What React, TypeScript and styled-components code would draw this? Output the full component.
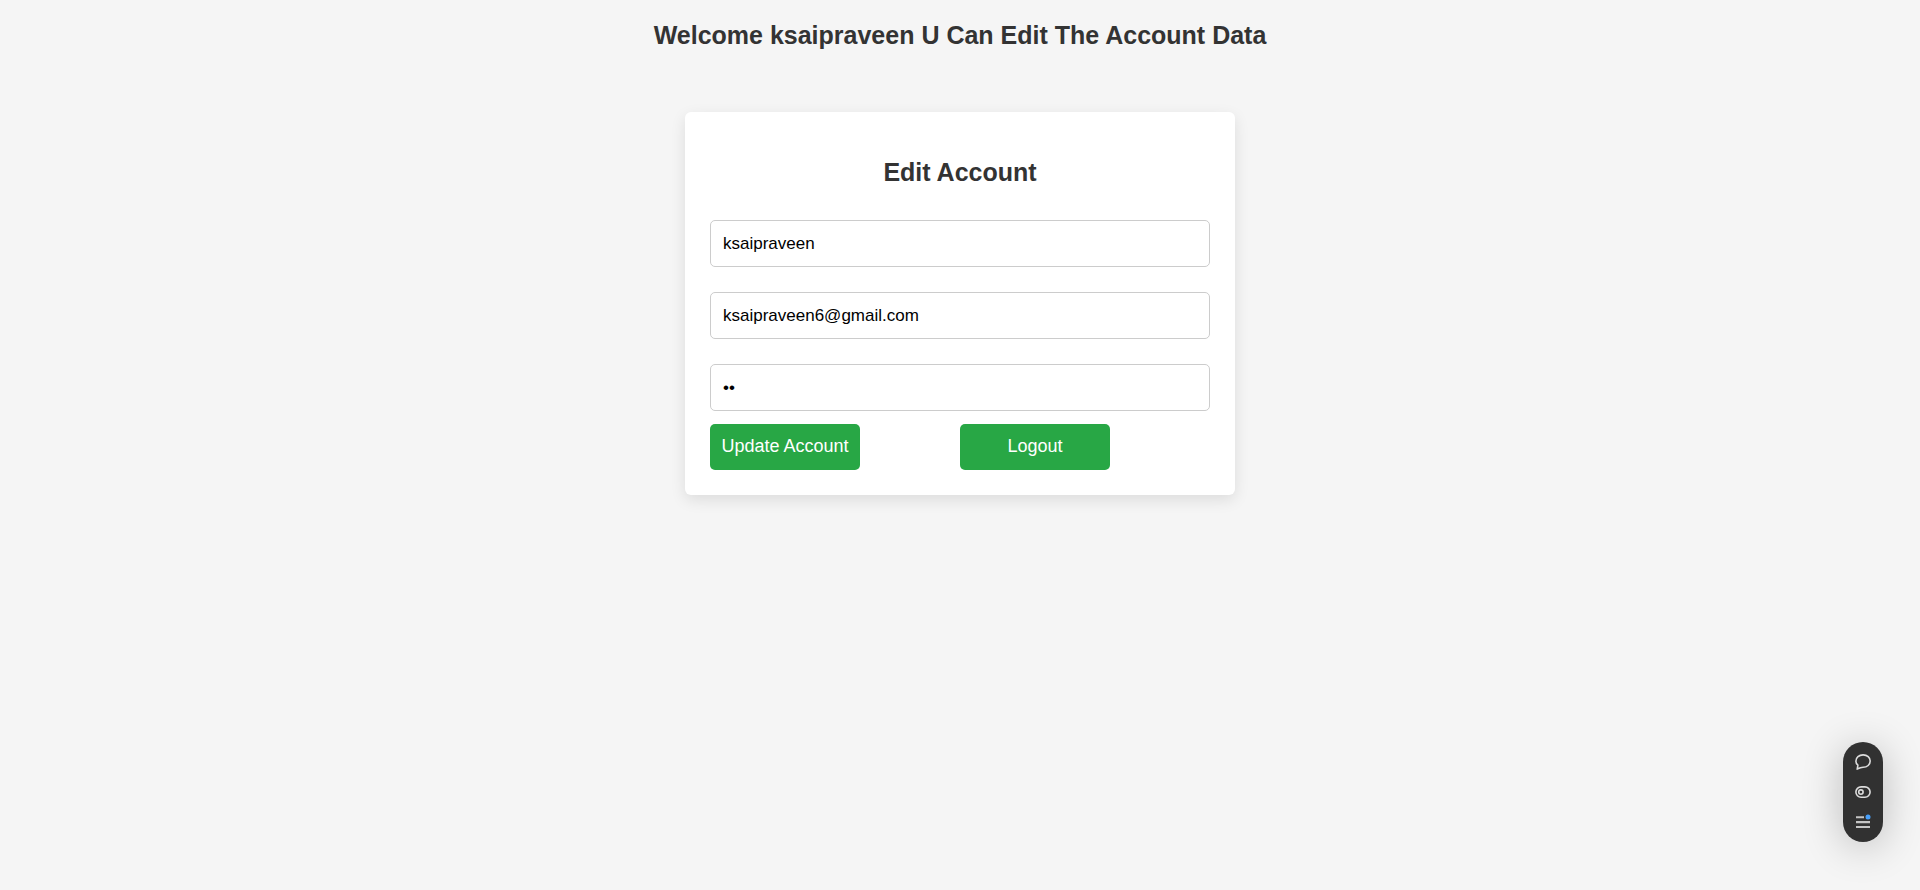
import React from "react";
import styled, { createGlobalStyle } from "styled-components";

const GlobalStyle = createGlobalStyle`
  html { min-height: 100%; background: #f5f5f5; }
  body { margin: 0; color: #333; font-family: "Liberation Sans", Arial, sans-serif; }
`;
const Page = styled.main`
  padding: 20px 20px 40px;
`;
const Title = styled.h1`
  margin: 0;
  font-size: 25px;
  line-height: 30px;
  text-align: center;
`;
const Card = styled.form`
  box-sizing: border-box;
  width: 100%;
  max-width: 550px;
  margin: 62px auto 0;
  padding: 25px;
  background: #fff;
  border-radius: 6px;
  box-shadow: 0 5px 15px rgba(0, 0, 0, 0.1);
`;
const Heading = styled.h2`
  margin: 20px 0 33px;
  font-size: 25px;
  line-height: 30px;
  text-align: center;
`;
const Fields = styled.div`
  display: flex;
  flex-direction: column;
  gap: 25px;
`;
const Input = styled.input`
  box-sizing: border-box;
  width: 100%;
  height: 47px;
  padding: 0 12px;
  border: 1px solid #ccc;
  border-radius: 5px;
  background: #fff;
  color: #000;
  font: 17px "Liberation Sans", Arial, sans-serif;
`;
const Actions = styled.div`
  display: flex;
  flex-wrap: wrap;
  gap: 12px 100px;
  margin-top: 13px;
`;
const Button = styled.button`
  width: 150px;
  height: 46px;
  padding: 0 0 2px;
  border: 0;
  border-radius: 5px;
  background: #28a745;
  color: #fff;
  font: 18px "Liberation Sans", Arial, sans-serif;
  cursor: pointer;
`;
const Toolbar = styled.div`
  position: fixed;
  right: 37px;
  bottom: 48px;
  box-sizing: border-box;
  display: flex;
  flex-direction: column;
  width: 40px;
  height: 100px;
  padding: 5px;
  border-radius: 20px;
  background: #313131;
  box-shadow: 0 5px 40px rgba(0, 0, 0, 0.24);
`;
const Tool = styled.button`
  display: flex;
  flex: 1;
  align-items: center;
  justify-content: center;
  padding: 0;
  border: 0;
  background: none;
  color: #dcdcdc;
  cursor: pointer;
`;
const Icon = styled.svg`
  width: 16px;
  height: 16px;
  fill: none;
  stroke: currentColor;
  stroke-width: 1.6;
  overflow: visible;
`;

export default function App() {
  return (
    <>
      <GlobalStyle />
      <Page>
        <Title>Welcome ksaipraveen U Can Edit The Account Data</Title>
        <Card onSubmit={(e) => e.preventDefault()}>
          <Heading>Edit Account</Heading>
          <Fields>
            <Input aria-label="Username" defaultValue="ksaipraveen" />
            <Input aria-label="Email" type="email" defaultValue="ksaipraveen6@gmail.com" />
            <Input aria-label="Password" type="password" defaultValue="12" />
          </Fields>
          <Actions>
            <Button type="submit">Update Account</Button>
            <Button type="button">Logout</Button>
          </Actions>
        </Card>
      </Page>
      <Toolbar>
        <Tool type="button" aria-label="Comment">
          <Icon viewBox="0 0 16 16">
            <path d="M2.2 15.1 2.9 11.2C1.6 10.2.9 8.8.9 7.2.9 3.6 4 .9 8.1.9s7.1 2.7 7.1 6.2-3 6.2-7.1 6.2c-1.2 0-1.7.1-2.7.5Z" strokeLinejoin="round" />
          </Icon>
        </Tool>
        <Tool type="button" aria-label="Toggle">
          <Icon viewBox="0 0 16 16">
            <rect x="0.9" y="2.9" width="14.2" height="10.4" rx="5.2" />
            <circle cx="5.9" cy="8.1" r="2.2" />
          </Icon>
        </Tool>
        <Tool type="button" aria-label="Menu">
          <Icon viewBox="0 0 16 16">
            <path d="M1 3.2h8M1 8.1h14M1 13h14" stroke="#c4c4c4" strokeWidth="2.1" />
            <circle cx="13" cy="3" r="2.5" fill="#479ffa" stroke="none" />
          </Icon>
        </Tool>
      </Toolbar>
    </>
  );
}
